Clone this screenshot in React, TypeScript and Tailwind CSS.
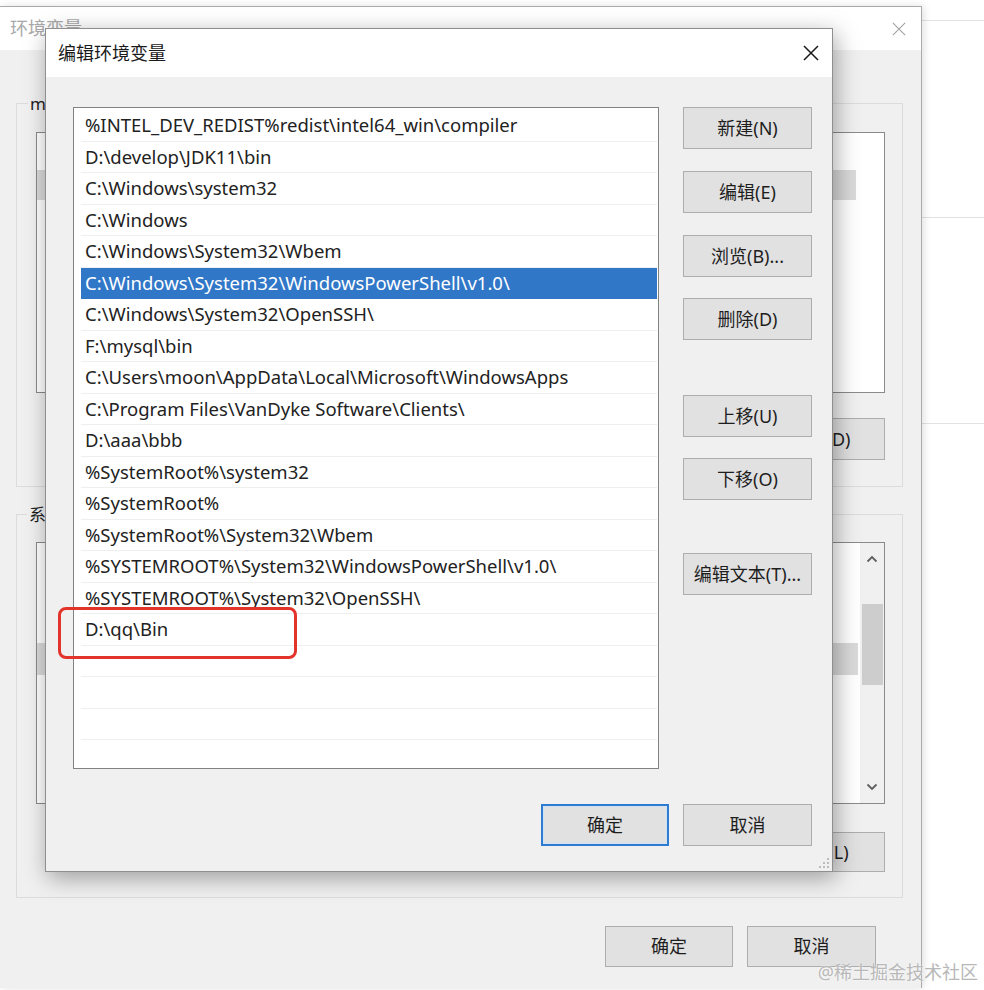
import React from "react";

const FONT = '"Noto Sans", "Noto Sans CJK SC", sans-serif';

const paths: string[] = [
  "%INTEL_DEV_REDIST%redist\\intel64_win\\compiler",
  "D:\\develop\\JDK11\\bin",
  "C:\\Windows\\system32",
  "C:\\Windows",
  "C:\\Windows\\System32\\Wbem",
  "C:\\Windows\\System32\\WindowsPowerShell\\v1.0\\",
  "C:\\Windows\\System32\\OpenSSH\\",
  "F:\\mysql\\bin",
  "C:\\Users\\moon\\AppData\\Local\\Microsoft\\WindowsApps",
  "C:\\Program Files\\VanDyke Software\\Clients\\",
  "D:\\aaa\\bbb",
  "%SystemRoot%\\system32",
  "%SystemRoot%",
  "%SystemRoot%\\System32\\Wbem",
  "%SYSTEMROOT%\\System32\\WindowsPowerShell\\v1.0\\",
  "%SYSTEMROOT%\\System32\\OpenSSH\\",
  "D:\\qq\\Bin",
  "",
  "",
  "",
  "",
];

function WinButton({
  children,
  className = "",
}: {
  children: React.ReactNode;
  className?: string;
}) {
  return (
    <div
      className={`flex shrink-0 items-center justify-center border border-[#adadad] bg-[#e1e1e1] text-[18px] text-[#1e1e1e] ${className}`}
    >
      {children}
    </div>
  );
}

function CloseX({ size, color, width }: { size: number; color: string; width: number }) {
  return (
    <svg width={size} height={size} viewBox="0 0 16 16">
      <path d="M1 1L15 15M15 1L1 15" stroke={color} strokeWidth={width} fill="none" />
    </svg>
  );
}

function Chevron({ up }: { up: boolean }) {
  return (
    <svg width="12" height="8" viewBox="0 0 12 8">
      <path
        d={up ? "M1.5 6.5L6 2L10.5 6.5" : "M1.5 1.5L6 6L10.5 1.5"}
        stroke="#5f5f5f"
        strokeWidth="1.8"
        fill="none"
      />
    </svg>
  );
}

function BackgroundDialog() {
  return (
    <div className="absolute left-0 top-[6px] flex h-[982px] w-[922px] flex-col border-r border-t border-[#aaaaaa] bg-[#f0f0f0] shadow-[2px_0_8px_rgba(0,0,0,0.12)]">
      <div className="flex h-[43px] shrink-0 items-center justify-between bg-white pl-[10px] pr-[15px]">
        <span className="text-[18px] text-[#a8a8a8]">环境变量</span>
        <CloseX size={14} color="#a0a0a0" width={1.2} />
      </div>
      <div className="flex flex-1 flex-col pl-[16px] pr-[18px] pt-[53px]">
        {/* user variables */}
        <div className="relative flex h-[384px] flex-col border border-[#dcdcdc] pl-[19px] pr-[17px] pt-[28px]">
          <span className="absolute -top-[13px] left-[11px] bg-[#f0f0f0] px-[2px] text-[17px] text-[#1e1e1e]">
            moon 的用户变量(U)
          </span>
          <div className="flex h-[261px] flex-col border border-[#8a8a8a] bg-white pt-[37px]">
            <div className="mr-[28px] h-[30px] bg-[#dadada]" />
          </div>
          <div className="mt-[25px] flex justify-end gap-[14px]">
            <WinButton className="h-[42px] w-[129px]">新建(N)...</WinButton>
            <WinButton className="h-[42px] w-[129px]">编辑(E)...</WinButton>
            <WinButton className="h-[42px] w-[129px]">删除(D)</WinButton>
          </div>
        </div>
        {/* system variables */}
        <div className="relative mt-[27px] flex h-[384px] flex-col border border-[#dcdcdc] pl-[19px] pr-[17px] pt-[27px]">
          <span className="absolute -top-[13px] left-[10px] bg-[#f0f0f0] px-[2px] text-[17px] text-[#1e1e1e]">
            系统变量(S)
          </span>
          <div className="flex h-[262px] border border-[#8a8a8a] bg-white">
            <div className="flex flex-1 flex-col pt-[100px]">
              <div className="mr-[2px] h-[32px] bg-[#dadada]" />
            </div>
            <div className="flex w-[24px] flex-col items-center bg-[#f0f0f0]">
              <div className="flex h-[32px] w-full items-center justify-center">
                <Chevron up />
              </div>
              <div className="mt-[29px] h-[81px] w-[21px] bg-[#cdcdcd]" />
              <div className="flex-1" />
              <div className="flex h-[32px] w-full items-center justify-center">
                <Chevron up={false} />
              </div>
            </div>
          </div>
          <div className="mt-[28px] flex justify-end gap-[14px]">
            <WinButton className="h-[40px] w-[129px]">新建(W)...</WinButton>
            <WinButton className="h-[40px] w-[129px]">编辑(I)...</WinButton>
            <WinButton className="h-[40px] w-[129px]">删除(L)</WinButton>
          </div>
        </div>
        <div className="mr-[27px] mt-[28px] flex justify-end gap-[14px]">
          <WinButton className="h-[41px] w-[128px]">确定</WinButton>
          <WinButton className="h-[41px] w-[129px]">取消</WinButton>
        </div>
      </div>
    </div>
  );
}

function EditDialog() {
  return (
    <div className="absolute left-[45px] top-[28px] flex h-[844px] w-[788px] flex-col border border-[#8f8f8f] bg-[#f0f0f0] shadow-[3px_6px_22px_rgba(0,0,0,0.35)]">
      <div className="flex h-[48px] shrink-0 items-center justify-between bg-white pl-[12px] pr-[13px]">
        <span className="text-[18px] text-[#1a1a1a]">编辑环境变量</span>
        <CloseX size={16} color="#1a1a1a" width={1.5} />
      </div>
      <div className="flex flex-1 flex-col pl-[27px] pr-[20px] pt-[30px]">
        <div className="flex gap-[24px]">
          <div className="flex h-[662px] w-[586px] flex-col overflow-hidden border border-[#828282] bg-white pl-[7px] pr-[1px] pt-[2px]">
            {paths.map((p, i) => {
              const selected = i === 5;
              return (
                <div
                  key={i}
                  className={`flex h-[31.5px] shrink-0 items-center whitespace-nowrap px-[4px] text-[18.5px] ${
                    selected
                      ? "bg-[#3177c8] text-white"
                      : "border-b border-[#efefef] text-[#222222]"
                  }`}
                >
                  {p}
                </div>
              );
            })}
          </div>
          <div className="flex w-[129px] flex-col">
            <WinButton className="h-[42px]">新建(N)</WinButton>
            <WinButton className="mt-[22px] h-[42px]">编辑(E)</WinButton>
            <WinButton className="mt-[22px] h-[42px]">浏览(B)...</WinButton>
            <WinButton className="mt-[21px] h-[42px]">删除(D)</WinButton>
            <WinButton className="mt-[55px] h-[42px]">上移(U)</WinButton>
            <WinButton className="mt-[21px] h-[42px]">下移(O)</WinButton>
            <WinButton className="mt-[53px] h-[42px]">编辑文本(T)...</WinButton>
          </div>
        </div>
        <div className="mt-[35px] flex justify-end gap-[14px]">
          <div className="flex h-[42px] w-[128px] items-center justify-center border-2 border-[#2f7bd0] bg-[#e1e1e1] text-[18px] text-[#1e1e1e] shadow-[inset_0_0_0_1px_#cfe3f7]">
            确定
          </div>
          <WinButton className="h-[42px] w-[129px]">取消</WinButton>
        </div>
      </div>
      {/* highlight annotation */}
      <div className="absolute left-[12px] top-[578px] h-[52px] w-[239px] rounded-[8px] border-[3px] border-[#e2342b]" />
      {/* resize grip */}
      <div className="absolute bottom-[2px] right-[2px]">
        <svg width="12" height="12" viewBox="0 0 12 12">
          <rect x="9" y="1" width="2" height="2" fill="#bdbdbd" />
          <rect x="9" y="5" width="2" height="2" fill="#bdbdbd" />
          <rect x="5" y="5" width="2" height="2" fill="#bdbdbd" />
          <rect x="9" y="9" width="2" height="2" fill="#bdbdbd" />
          <rect x="5" y="9" width="2" height="2" fill="#bdbdbd" />
          <rect x="1" y="9" width="2" height="2" fill="#bdbdbd" />
        </svg>
      </div>
    </div>
  );
}

export default function App() {
  return (
    <div
      className="relative h-[990px] w-[984px] overflow-hidden bg-white"
      style={{ fontFamily: FONT }}
    >
      {/* window behind, on the right */}
      <div className="absolute inset-0 flex flex-col">
        <div className="h-[21px] border-b border-[#e2e2e2]" />
        <div className="h-[197px] border-b border-[#e2e2e2]" />
        <div className="h-[206px] border-b border-[#e2e2e2]" />
      </div>
      <BackgroundDialog />
      <EditDialog />
      <div className="absolute bottom-[4px] right-[6px] text-[18px] text-[#b8b8b8] [text-shadow:0_0_2px_#ffffff]">
        @稀土掘金技术社区
      </div>
    </div>
  );
}
